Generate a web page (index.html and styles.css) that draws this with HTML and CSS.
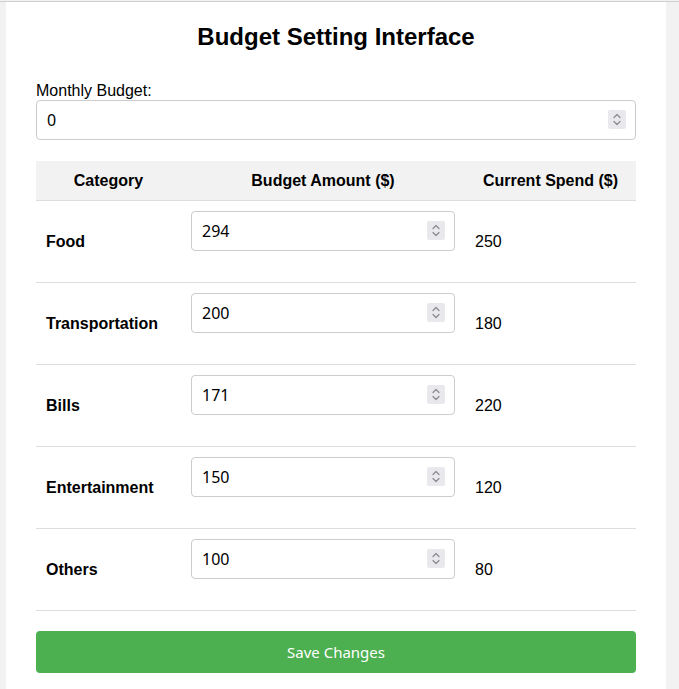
FILE: index.html
```html
<!DOCTYPE html>
<html lang="en">
<head>
<meta charset="utf-8">
<title>Budget Setting Interface</title>
<link rel="stylesheet" href="styles.css">
</head>
<body>
<div class="page">
  <div class="container">
    <h2 class="title">Budget Setting Interface</h2>
    <label class="monthly-label" for="monthly">Monthly Budget:</label>
    <div class="num-wrap monthly-wrap">
      <input class="field" id="monthly" type="number" value="0">
      <span class="spin" aria-hidden="true">
        <svg viewBox="0 0 18 19" width="18" height="19"><path d="M6 7.5 L9 4.5 L12 7.5" /><path d="M6 11.5 L9 14.5 L12 11.5" /></svg>
      </span>
    </div>
    <table class="budget-table">
      <thead>
        <tr>
          <th class="col-cat">Category</th>
          <th class="col-amt">Budget Amount ($)</th>
          <th class="col-spend">Current Spend ($)</th>
        </tr>
      </thead>
      <tbody>
        <tr>
          <td class="cat">Food</td>
          <td class="amt"><div class="num-wrap cell-wrap"><input class="field" type="number" value="294"><span class="spin" aria-hidden="true"><svg viewBox="0 0 18 19" width="18" height="19"><path d="M6 7.5 L9 4.5 L12 7.5" /><path d="M6 11.5 L9 14.5 L12 11.5" /></svg></span></div></td>
          <td class="spend">250</td>
        </tr>
        <tr>
          <td class="cat">Transportation</td>
          <td class="amt"><div class="num-wrap cell-wrap"><input class="field" type="number" value="200"><span class="spin" aria-hidden="true"><svg viewBox="0 0 18 19" width="18" height="19"><path d="M6 7.5 L9 4.5 L12 7.5" /><path d="M6 11.5 L9 14.5 L12 11.5" /></svg></span></div></td>
          <td class="spend">180</td>
        </tr>
        <tr>
          <td class="cat">Bills</td>
          <td class="amt"><div class="num-wrap cell-wrap"><input class="field" type="number" value="171"><span class="spin" aria-hidden="true"><svg viewBox="0 0 18 19" width="18" height="19"><path d="M6 7.5 L9 4.5 L12 7.5" /><path d="M6 11.5 L9 14.5 L12 11.5" /></svg></span></div></td>
          <td class="spend">220</td>
        </tr>
        <tr>
          <td class="cat">Entertainment</td>
          <td class="amt"><div class="num-wrap cell-wrap"><input class="field" type="number" value="150"><span class="spin" aria-hidden="true"><svg viewBox="0 0 18 19" width="18" height="19"><path d="M6 7.5 L9 4.5 L12 7.5" /><path d="M6 11.5 L9 14.5 L12 11.5" /></svg></span></div></td>
          <td class="spend">120</td>
        </tr>
        <tr>
          <td class="cat">Others</td>
          <td class="amt"><div class="num-wrap cell-wrap"><input class="field" type="number" value="100"><span class="spin" aria-hidden="true"><svg viewBox="0 0 18 19" width="18" height="19"><path d="M6 7.5 L9 4.5 L12 7.5" /><path d="M6 11.5 L9 14.5 L12 11.5" /></svg></span></div></td>
          <td class="spend">80</td>
        </tr>
      </tbody>
    </table>
    <button class="save-btn" type="button">Save Changes</button>
  </div>
</div>
</body>
</html>
```

FILE: styles.css
```css
html, body {
  margin: 0;
  padding: 0;
}

body {
  background: #f2f2f2;
  font-family: "Liberation Sans", Arial, sans-serif;
  color: #000;
}

.page {
  margin-top: 1px;
  border-top: 1px solid #cfcfcf;
}

.container {
  margin-left: 6px;
  width: 660px;
  box-sizing: border-box;
  background: #fff;
  padding: 21px 30px 16px 30px;
}

.title {
  margin: 0 0 31px 0;
  font-size: 24px;
  font-weight: bold;
  text-align: center;
  line-height: 28px;
}

.monthly-label {
  display: block;
  font-size: 16px;
  line-height: 18px;
}

.num-wrap {
  position: relative;
}

.field {
  display: block;
  box-sizing: border-box;
  width: 100%;
  height: 40px;
  padding: 0 10px;
  border: 1px solid #ccc;
  border-radius: 4px;
  font-family: "Noto Sans", sans-serif;
  font-size: 16px;
  color: #000;
  background: #fff;
  -moz-appearance: textfield;
  appearance: textfield;
}

.field::-webkit-inner-spin-button,
.field::-webkit-outer-spin-button {
  -webkit-appearance: none;
  margin: 0;
}

.spin {
  position: absolute;
  right: 10px;
  top: 10px;
  width: 18px;
  height: 19px;
  background: #e9e9ed;
  border-radius: 2px;
  display: flex;
}

.spin svg {
  display: block;
}

.spin path {
  fill: none;
  stroke: #8a8a8e;
  stroke-width: 1.2;
  stroke-linecap: round;
  stroke-linejoin: round;
}

.monthly-wrap {
  margin-bottom: 21px;
}

.budget-table {
  width: 100%;
  border-collapse: collapse;
  table-layout: fixed;
}

.col-cat { width: 125px; }
.col-amt { width: 264px; }
.col-spend { width: 151px; }

.budget-table th {
  background: #f2f2f2;
  font-size: 16px;
  font-weight: bold;
  text-align: center;
  height: 39px;
  padding: 0 10px;
  border-bottom: 1px solid #ddd;
  line-height: 18px;
}

.budget-table td {
  padding: 10px;
  border-bottom: 1px solid #ddd;
  font-size: 16px;
  vertical-align: middle;
  line-height: 18px;
}

.budget-table td.cat {
  font-weight: bold;
}

.cell-wrap {
  margin-bottom: 21px;
}

.save-btn {
  display: block;
  width: 100%;
  height: 42px;
  margin-top: 20px;
  border: none;
  border-radius: 4px;
  background: #4caf50;
  color: #fff;
  font-family: "Noto Sans", sans-serif;
  font-size: 15px;
  cursor: pointer;
}
```
